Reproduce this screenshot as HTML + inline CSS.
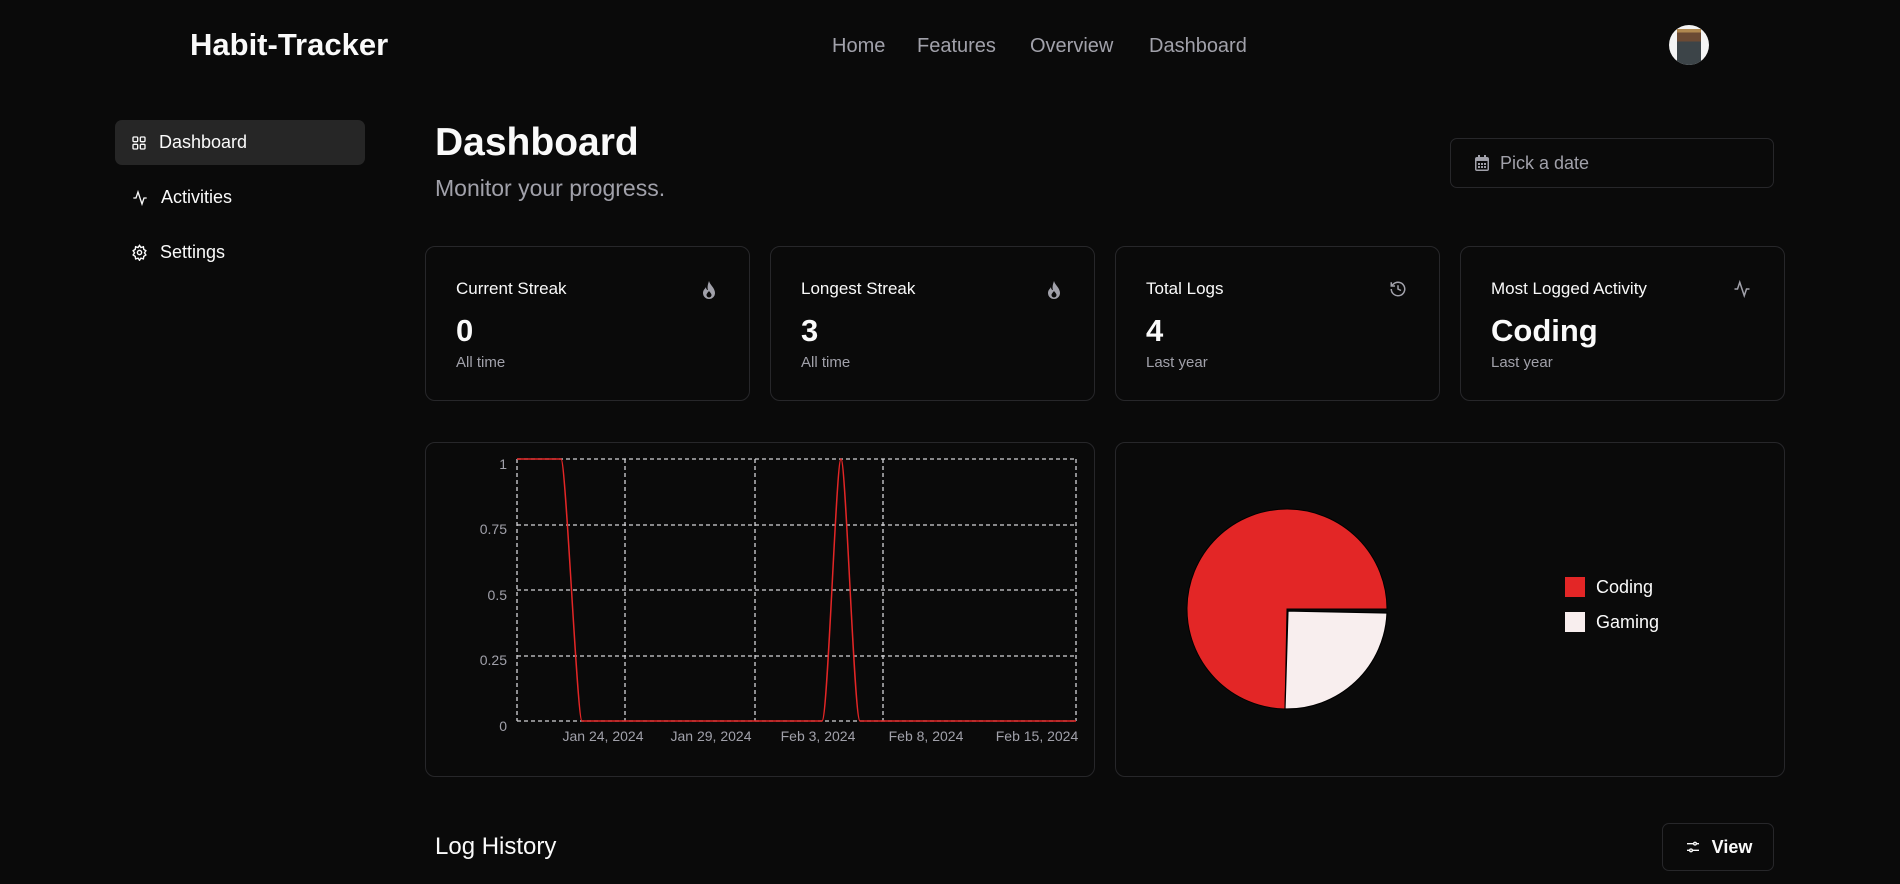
<!DOCTYPE html>
<html><head><meta charset="utf-8"><style>
*{margin:0;padding:0;box-sizing:border-box}
body{width:1900px;height:884px;background:#0a0a0a;color:#fafafa;font-family:"Liberation Sans",sans-serif;position:relative;overflow:hidden}
.a{position:absolute}
.nav{color:#a1a1aa;font-size:20px;top:35px}
.card{position:absolute;top:246px;width:325px;height:155px;border:1px solid #27272a;border-radius:10px}
.card .t{position:absolute;left:30px;top:32px;font-size:17px;color:#fafafa}
.card .n{position:absolute;left:30px;top:66px;font-size:31px;font-weight:bold}
.card .s{position:absolute;left:30px;top:107px;font-size:15px;color:#a1a1aa}
.card svg{position:absolute;right:32px;top:33px}
.side{left:115px;width:250px;height:45px;border-radius:7px;font-size:18px;display:flex;align-items:center;padding-left:16px;gap:12px}
</style></head><body>
<div class="a" style="left:190px;top:27px;font-size:31px;font-weight:bold">Habit-Tracker</div>
<div class="a nav" style="left:832px">Home</div>
<div class="a nav" style="left:917px">Features</div>
<div class="a nav" style="left:1030px">Overview</div>
<div class="a nav" style="left:1149px">Dashboard</div>
<div class="a" style="left:1669px;top:25px;width:40px;height:40px;border-radius:50%;overflow:hidden;background:#f4f4f4"><div style="position:absolute;left:8px;top:4px;width:24px;height:36px;background:linear-gradient(#b08850 0 10%,#6b4a34 10% 35%,#3c4448 35%)"></div></div>

<div class="a side" style="top:120px;background:#262626"><svg width="16" height="16" viewBox="0 0 24 24" fill="none" stroke="#fafafa" stroke-width="2"><rect x="3" y="3" width="7" height="7" rx="1.5"/><rect x="14" y="3" width="7" height="7" rx="1.5"/><rect x="3" y="14" width="7" height="7" rx="1.5"/><rect x="14" y="14" width="7" height="7" rx="1.5"/></svg>Dashboard</div>
<div class="a side" style="top:175px"><svg width="18" height="16" viewBox="0 0 24 24" fill="none" stroke="#fafafa" stroke-width="2"><path d="M22 12h-4l-3 9L9 3l-3 9H2"/></svg>Activities</div>
<div class="a side" style="top:230px"><svg width="17" height="17" viewBox="0 0 24 24" fill="none" stroke="#fafafa" stroke-width="2"><circle cx="12" cy="12" r="3"/><path d="M12 2l2 3 3.5-1 .5 3.5 3 2-2 3 2 3-3 2-.5 3.5-3.5-1-2 3-2-3-3.5 1-.5-3.5-3-2 2-3-2-3 3-2 .5-3.5 3.5 1z"/></svg>Settings</div>

<div class="a" style="left:435px;top:121px;font-size:39px;font-weight:bold">Dashboard</div>
<div class="a" style="left:435px;top:175px;font-size:23px;color:#a1a1aa">Monitor your progress.</div>
<div class="a" style="left:1450px;top:138px;width:324px;height:50px;border:1px solid #27272a;border-radius:7px;display:flex;align-items:center;padding-left:23px;gap:10px;color:#a1a1aa;font-size:18px"><svg width="16" height="17" viewBox="0 0 16 17"><rect x="1" y="2" width="14" height="14" rx="2" fill="#a1a1aa"/><rect x="2.5" y="6" width="11" height="8.5" fill="#0a0a0a"/><rect x="4" y="0" width="2" height="4" fill="#a1a1aa"/><rect x="10" y="0" width="2" height="4" fill="#a1a1aa"/><g fill="#a1a1aa"><rect x="4" y="8" width="2" height="2"/><rect x="7" y="8" width="2" height="2"/><rect x="10" y="8" width="2" height="2"/><rect x="4" y="11" width="2" height="2"/><rect x="7" y="11" width="2" height="2"/><rect x="10" y="11" width="2" height="2"/></g></svg>Pick a date</div>

<div class="card" style="left:425px"><div class="t">Current Streak</div><div class="n">0</div><div class="s">All time</div><svg width="16" height="20" viewBox="0 0 16 20"><path d="M8 1C9 5 14 8 14 13a6 6 0 0 1-12 0c0-3 2-4 3-6 0 2 1 3 2 3C6 7 7 4 8 1z" fill="#a1a1aa"/><path d="M8 11c1 1.5 2.5 2.5 2.5 4a2.5 2.5 0 0 1-5 0c0-1.5 1.5-2.5 2.5-4z" fill="#0a0a0a"/></svg></div>
<div class="card" style="left:770px"><div class="t">Longest Streak</div><div class="n">3</div><div class="s">All time</div><svg width="16" height="20" viewBox="0 0 16 20"><path d="M8 1C9 5 14 8 14 13a6 6 0 0 1-12 0c0-3 2-4 3-6 0 2 1 3 2 3C6 7 7 4 8 1z" fill="#a1a1aa"/><path d="M8 11c1 1.5 2.5 2.5 2.5 4a2.5 2.5 0 0 1-5 0c0-1.5 1.5-2.5 2.5-4z" fill="#0a0a0a"/></svg></div>
<div class="card" style="left:1115px"><div class="t">Total Logs</div><div class="n">4</div><div class="s">Last year</div><svg width="18" height="18" viewBox="0 0 24 24" fill="none" stroke="#a1a1aa" stroke-width="2"><path d="M3 12a9 9 0 1 0 3-6.7L3 8"/><path d="M3 3v5h5"/><path d="M12 7v5l4 2"/></svg></div>
<div class="card" style="left:1460px"><div class="t">Most Logged Activity</div><div class="n">Coding</div><div class="s">Last year</div><svg width="20" height="18" viewBox="0 0 24 24" fill="none" stroke="#a1a1aa" stroke-width="2"><path d="M22 12h-4l-3 9L9 3l-3 9H2"/></svg></div>

<div class="a" style="left:425px;top:442px;width:670px;height:335px;border:1px solid #27272a;border-radius:10px"></div>
<div class="a" style="left:1115px;top:442px;width:670px;height:335px;border:1px solid #27272a;border-radius:10px"></div>

<svg class="a" style="left:0;top:0" width="1900" height="884">
<g stroke="#d4d4d8" stroke-width="1.3" stroke-dasharray="4 3" fill="none">
<path d="M517 459H1076M517 525H1076M517 590H1076M517 656H1076M517 721H1076"/>
<path d="M517 459V721M625 459V721M755 459V721M883 459V721M1076 459V721"/>
</g>
<g fill="#a1a1aa" font-size="14" font-family="Liberation Sans" text-anchor="end">
<text x="507" y="469">1</text><text x="507" y="534">0.75</text><text x="507" y="600">0.5</text><text x="507" y="665">0.25</text><text x="507" y="731">0</text>
</g>
<g fill="#a1a1aa" font-size="14" font-family="Liberation Sans" text-anchor="middle">
<text x="603" y="741">Jan 24, 2024</text><text x="711" y="741">Jan 29, 2024</text><text x="818" y="741">Feb 3, 2024</text><text x="926" y="741">Feb 8, 2024</text><text x="1037" y="741">Feb 15, 2024</text>
</g>
<path d="M517 459H561C566 459 577 721 582 721H822C828 721 836 459 841 459C846 459 854 721 860 721H1076" fill="none" stroke="#e32626" stroke-width="1.5"/>
<path d="M1287 609L1387 609A100 100 0 1 0 1285 709Z" fill="#e32626" stroke="#000" stroke-width="1"/>
<path d="M1288 611L1387 613A100 100 0 0 1 1285 709Z" fill="#f8eeee" stroke="#000" stroke-width="1.2"/>
<rect x="1565" y="577" width="20" height="20" fill="#e32626"/><rect x="1565" y="612" width="20" height="20" fill="#f8eeee"/>
<text x="1596" y="593" fill="#fafafa" font-size="18" font-family="Liberation Sans">Coding</text>
<text x="1596" y="628" fill="#fafafa" font-size="18" font-family="Liberation Sans">Gaming</text>
</svg>

<div class="a" style="left:435px;top:833px;font-size:24px">Log History</div>
<div class="a" style="left:1662px;top:823px;width:112px;height:48px;border:1px solid #27272a;border-radius:7px;display:flex;align-items:center;justify-content:center;gap:10px;font-size:18px;font-weight:bold"><svg width="18" height="16" viewBox="0 0 24 24" fill="none" stroke="#fafafa" stroke-width="2"><path d="M3 7h10M17 7h4M3 17h4M11 17h10"/><circle cx="15" cy="7" r="2"/><circle cx="9" cy="17" r="2"/></svg>View</div>
</body></html>
